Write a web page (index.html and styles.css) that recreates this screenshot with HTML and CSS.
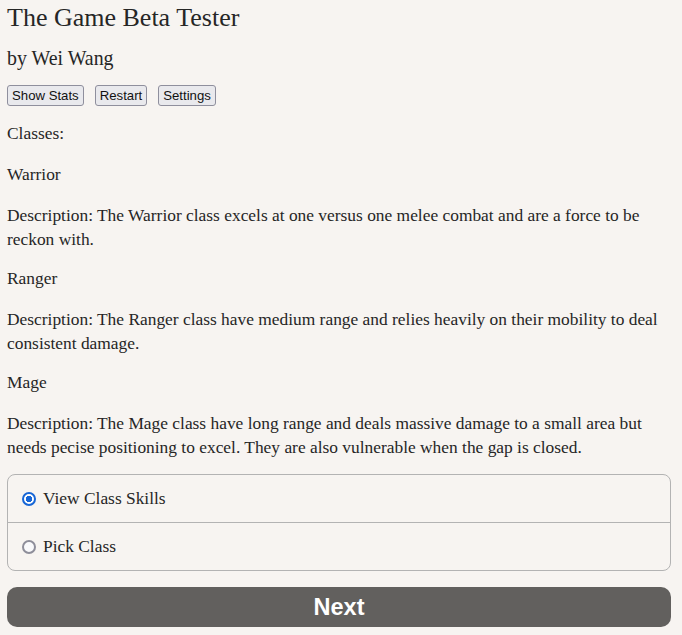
FILE: index.html
```html
<!DOCTYPE html>
<html lang="en">
<head>
<meta charset="utf-8">
<title>The Game Beta Tester</title>
<link rel="stylesheet" href="styles.css">
</head>
<body>
<main class="page">
  <h1 class="title">The Game Beta Tester</h1>
  <h2 class="byline">by Wei Wang</h2>
  <div class="toolbar">
    <button class="tool-btn">Show Stats</button>
    <button class="tool-btn">Restart</button>
    <button class="tool-btn">Settings</button>
  </div>
  <p class="label">Classes:</p>
  <section class="class-block">
    <p class="class-name">Warrior</p>
    <p class="class-desc">Description: The Warrior class excels at one versus one melee combat and are a force to be reckon with.</p>
  </section>
  <section class="class-block">
    <p class="class-name">Ranger</p>
    <p class="class-desc">Description: The Ranger class have medium range and relies heavily on their mobility to deal consistent damage.</p>
  </section>
  <section class="class-block">
    <p class="class-name">Mage</p>
    <p class="class-desc">Description: The Mage class have long range and deals massive damage to a small area but needs pecise positioning to excel. They are also vulnerable when the gap is closed.</p>
  </section>
  <div class="choices">
    <label class="choice"><input type="radio" name="opt" class="radio" checked><span>View Class Skills</span></label>
    <label class="choice"><input type="radio" name="opt" class="radio"><span>Pick Class</span></label>
  </div>
  <button class="next-btn">Next</button>
</main>
</body>
</html>
```
FILE: styles.css
```css
html, body {
  margin: 0;
  padding: 0;
  background: #f7f4f1;
}
body {
  font-family: "Liberation Serif", "Times New Roman", serif;
  font-size: 17.4px;
  color: #262626;
}
.page {
  padding: 4px 11px 0 7px;
  display: flex;
  flex-direction: column;
}
.title {
  margin: 0;
  font-size: 26px;
  font-weight: normal;
  line-height: 28px;
}
.byline {
  margin: 14px 0 0;
  font-size: 19.9px;
  font-weight: normal;
  line-height: 24px;
}
.toolbar {
  display: flex;
  gap: 11px;
  margin-top: 15px;
}
.tool-btn {
  font-family: "Liberation Sans", Arial, sans-serif;
  font-size: 13.2px;
  color: #111;
  background: #e9e9ed;
  border: 1px solid #8f8f9d;
  border-radius: 3px;
  padding: 0 4px;
  height: 21px;
  line-height: 19px;
}
.label {
  margin: 15px 0 0;
  line-height: 24px;
}
.class-block {
  margin-top: 17px;
}
.class-block + .class-block {
  margin-top: 15px;
}
.class-name {
  margin: 0;
  line-height: 24px;
}
.class-desc {
  margin: 17px 0 0;
  line-height: 24px;
}
.choices {
  margin-top: 15px;
  border: 1px solid #b3b3b3;
  border-radius: 8px;
  display: flex;
  flex-direction: column;
}
.choice {
  display: flex;
  align-items: center;
  gap: 7px;
  height: 47px;
  padding-left: 14px;
}
.choice + .choice {
  border-top: 1px solid #b3b3b3;
}
.radio {
  appearance: none;
  margin: 0;
  width: 14px;
  height: 14px;
  border-radius: 50%;
  border: 2px solid #8e8e9a;
  background: #f9f9fb;
  box-sizing: border-box;
}
.radio:checked {
  border-color: #1766d6;
  background: radial-gradient(circle, #1766d6 0 3px, #ffffff 3.5px);
}
.next-btn {
  margin-top: 16px;
  height: 40px;
  border: none;
  border-radius: 10px;
  background: #62605e;
  color: #ffffff;
  font-family: "Liberation Sans", Arial, sans-serif;
  font-weight: bold;
  font-size: 23.5px;
}
```
